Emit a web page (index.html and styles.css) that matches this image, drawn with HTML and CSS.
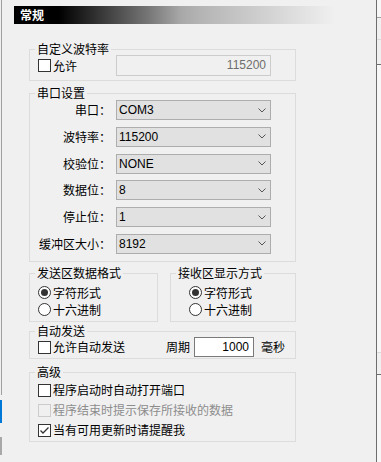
FILE: index.html
```html
<!DOCTYPE html>
<html lang="zh-CN">
<head>
    <meta charset="UTF-8">
    <meta name="viewport" content="width=device-width, initial-scale=1.0">
    <title>常规设置</title>
    <link rel="stylesheet" href="styles.css">
</head>
<body>
    <div class="shell">
        <div class="rail-left">
            <span class="rail-line"></span>
            <span class="rail-mark"></span>
            <span class="rail-mark idle"></span>
        </div>

        <main class="panel">
            <div class="panel-title">常规</div>

            <fieldset class="group g-baud">
                <legend>自定义波特率</legend>
                <div class="form-row">
                    <label class="check field-label-left"><span class="box"></span>允许</label>
                    <div class="text-box disabled">115200</div>
                </div>
            </fieldset>

            <fieldset class="group g-port">
                <legend>串口设置</legend>
                <div class="form-row"><span class="field-label">串口：</span><div class="combo">COM3<svg class="chev" width="8" height="5" viewBox="0 0 8 5"><path d="M0.5 0.5 L4 4 L7.5 0.5" fill="none" stroke="#555" stroke-width="1"/></svg></div></div>
                <div class="form-row"><span class="field-label">波特率：</span><div class="combo">115200<svg class="chev" width="8" height="5" viewBox="0 0 8 5"><path d="M0.5 0.5 L4 4 L7.5 0.5" fill="none" stroke="#555" stroke-width="1"/></svg></div></div>
                <div class="form-row"><span class="field-label">校验位：</span><div class="combo">NONE<svg class="chev" width="8" height="5" viewBox="0 0 8 5"><path d="M0.5 0.5 L4 4 L7.5 0.5" fill="none" stroke="#555" stroke-width="1"/></svg></div></div>
                <div class="form-row"><span class="field-label">数据位：</span><div class="combo">8<svg class="chev" width="8" height="5" viewBox="0 0 8 5"><path d="M0.5 0.5 L4 4 L7.5 0.5" fill="none" stroke="#555" stroke-width="1"/></svg></div></div>
                <div class="form-row"><span class="field-label">停止位：</span><div class="combo">1<svg class="chev" width="8" height="5" viewBox="0 0 8 5"><path d="M0.5 0.5 L4 4 L7.5 0.5" fill="none" stroke="#555" stroke-width="1"/></svg></div></div>
                <div class="form-row"><span class="field-label">缓冲区大小：</span><div class="combo">8192<svg class="chev" width="8" height="5" viewBox="0 0 8 5"><path d="M0.5 0.5 L4 4 L7.5 0.5" fill="none" stroke="#555" stroke-width="1"/></svg></div></div>
            </fieldset>

            <div class="pair">
                <fieldset class="group g-send">
                    <legend>发送区数据格式</legend>
                    <label class="radio"><span class="dot on"></span>字符形式</label>
                    <label class="radio"><span class="dot"></span>十六进制</label>
                </fieldset>
                <fieldset class="group g-recv">
                    <legend>接收区显示方式</legend>
                    <label class="radio"><span class="dot on"></span>字符形式</label>
                    <label class="radio"><span class="dot"></span>十六进制</label>
                </fieldset>
            </div>

            <fieldset class="group g-auto">
                <legend>自动发送</legend>
                <div class="form-row">
                    <label class="check"><span class="box"></span>允许自动发送</label>
                    <div class="period">
                        <span>周期</span>
                        <div class="num-box">1000</div>
                        <span>毫秒</span>
                    </div>
                </div>
            </fieldset>

            <fieldset class="group g-adv">
                <legend>高级</legend>
                <label class="check row"><span class="box"></span>程序启动时自动打开端口</label>
                <label class="check row disabled"><span class="box"></span>程序结束时提示保存所接收的数据</label>
                <label class="check row"><span class="box"><svg width="11" height="11" viewBox="0 0 11 11"><path d="M1.5 5.5 L4 8 L9.5 2.5" fill="none" stroke="#333" stroke-width="1.3"/></svg></span>当有可用更新时请提醒我</label>
            </fieldset>
        </main>

        <div class="rail-right">
            <span class="stub top"></span>
            <span class="stub mid"></span>
            <span class="stub low"></span>
        </div>
    </div>
</body>
</html>
```

FILE: styles.css
```css
* {
    box-sizing: border-box;
}
body {
    margin: 0;
    background-color: #f0f0f0;
    color: #000;
    font-family: "Noto Sans CJK SC", sans-serif;
    font-size: 12px;
    line-height: 14px;
    overflow: hidden;
}
.shell {
    display: flex;
    height: 462px;
}

/* left edge of the neighbouring list */
.rail-left {
    width: 3px;
    flex: none;
    display: flex;
    flex-direction: column;
}
.rail-line {
    display: block;
    width: 1px;
    height: 395px;
    margin-left: 1px;
    background-color: #a0a0a0;
}
.rail-mark {
    display: block;
    width: 2px;
    height: 23px;
    margin-top: 5px;
    background-color: #0078d7;
}
.rail-mark.idle {
    height: 18px;
    margin-top: 14px;
    background-color: #a8a8a8;
}

/* right edge */
.rail-right {
    width: 5px;
    flex: none;
    border-left: 1px solid #6e6e6e;
    background-color: #f7f7f7;
    padding-top: 17px;
}
.stub {
    display: block;
    background-color: #f0f0f0;
}
.stub.top {
    height: 22px;
    border-top: 1px solid #a0a0a0;
}
.stub.mid {
    height: 26px;
    border-top: 1px solid #dadada;
    border-bottom: 1px solid #6e6e6e;
}
.stub.low {
    height: 23px;
    margin-top: 287px;
    border-top: 1px solid #dadada;
    border-bottom: 1px solid #6e6e6e;
}

.panel {
    flex: 1;
    padding: 6px 0 0 11px;
}
.panel-title {
    width: 321px;
    height: 18px;
    padding-left: 6px;
    line-height: 18px;
    color: #fff;
    font-weight: bold;
    background: linear-gradient(to right, #000 0%, #000 14%, #777 42%, #a8a8a8 52%, #b4b4b4 58%, #f0f0f0 100%);
}

/* group boxes */
.group {
    width: 267px;
    min-width: 0;
    margin: 0 0 0 15px;
    padding: 0 8px;
    border: 1px solid #dcdcdc;
}
.group legend {
    margin-left: -3px;
    padding: 0 2px;
    line-height: 12px;
}
.g-baud {
    margin-top: 19px;
    padding-bottom: 4px;
}
.g-port {
    margin-top: 6px;
    padding-top: 1px;
    padding-bottom: 7px;
    display: flex;
    flex-direction: column;
    gap: 6.8px;
}
.pair {
    display: flex;
    gap: 12px;
    margin: 5.5px 0 0 15px;
}
.pair .group {
    margin: 0;
    padding-top: 5px;
    padding-bottom: 3px;
}
.g-send {
    width: 129px;
}
.g-recv {
    width: 126px;
    padding-left: 18px;
}
.g-recv legend {
    margin-left: -13px;
}
.g-auto {
    margin-top: 3px;
    padding-bottom: 1px;
}
.g-adv {
    margin-top: 7px;
    padding-top: 2px;
    padding-bottom: 1px;
}

.form-row {
    display: flex;
    align-items: center;
    height: 20px;
}
.g-baud .form-row {
    height: 21px;
}
.field-label {
    width: 78px;
    padding-right: 5px;
    text-align: right;
}
.field-label-left {
    width: 78px;
}

.combo {
    display: flex;
    align-items: center;
    width: 155px;
    height: 20px;
    padding-left: 2px;
    border: 1px solid #adadad;
    background-color: #e1e1e1;
    font-family: "Liberation Sans", sans-serif;
    font-size: 12px;
}
.chev {
    margin-left: auto;
    margin-right: 4px;
}

.text-box {
    width: 155px;
    height: 21px;
    padding-right: 4px;
    border: 1px solid #cccccc;
    background-color: #f0f0f0;
    color: #6d6d6d;
    text-align: right;
    line-height: 19px;
    font-family: "Liberation Sans", sans-serif;
}

.check {
    display: flex;
    align-items: center;
}
.check .box {
    display: flex;
    align-items: center;
    justify-content: center;
    width: 13px;
    height: 13px;
    margin-right: 2px;
    border: 1px solid #333;
    background-color: #fff;
}
.check.row {
    height: 20px;
}
.check.disabled {
    color: #8d8d8d;
}
.check.disabled .box {
    border-color: #cccccc;
    background-color: #f0f0f0;
}

.radio {
    display: flex;
    align-items: center;
    height: 17px;
}
.radio .dot {
    display: flex;
    align-items: center;
    justify-content: center;
    width: 13px;
    height: 13px;
    margin-right: 2px;
    border: 1px solid #333;
    border-radius: 50%;
    background-color: #fff;
}
.radio .dot.on::after {
    content: "";
    width: 7px;
    height: 7px;
    border-radius: 50%;
    background-color: #333;
}

.period {
    display: flex;
    align-items: center;
    margin-left: auto;
    margin-right: 2px;
}
.num-box {
    width: 60px;
    height: 20px;
    margin: 0 7px 0 4px;
    padding-right: 4px;
    border: 1px solid #7a7a7a;
    background-color: #fff;
    text-align: right;
    line-height: 18px;
    font-family: "Liberation Sans", sans-serif;
}
```
